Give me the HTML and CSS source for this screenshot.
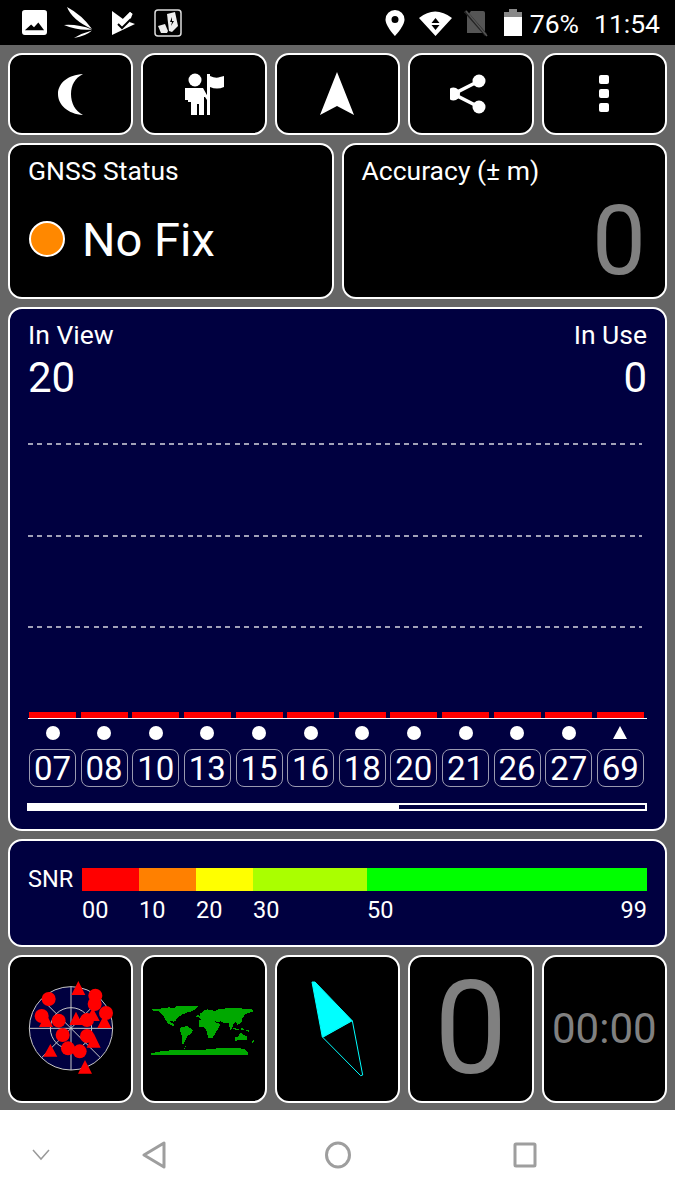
FILE: index.html
```html
<!DOCTYPE html>
<html lang="en">
<head>
<meta charset="utf-8">
<title>GNSS Status</title>
<link rel="stylesheet" href="styles.css">
</head>
<body>
<div class="status-bar">
  <div class="status-left">
    <svg class="si" width="25" height="25" viewBox="0 0 26 26"><path fill="#fff" fill-rule="evenodd" d="M3 0h20a3 3 0 0 1 3 3v20a3 3 0 0 1-3 3H3a3 3 0 0 1-3-3V3a3 3 0 0 1 3-3zM3 21h20l-6-8-4.500 5-3-3z"/></svg>
    <svg class="si bird" width="30" height="34" viewBox="0 0 30 34"><path fill="#fff" d="M4 1Q9 14 29 23Q19 9 4 1zM1 19Q15 25 29 23.500Q15 18 1 19zM11 32Q23 30 29 24.500Q19 27 11 32z"/></svg>
    <svg class="si check" width="23" height="25" viewBox="0 0 23 25"><path fill="#fff" d="M0 0l11 8 7-7 2.500 2-3 8 5.500 2L0 24z"/><path fill="none" stroke="#000" stroke-width="2" d="M6 13l4 4 9-9"/><path fill="#fff" d="M10 9l8-8 2.500 2-9 10z"/></svg>
    <svg class="si" width="28" height="28" viewBox="0 0 28 28"><rect x="1" y="1" width="26" height="26" rx="3" fill="none" stroke="#ddd" stroke-width="1.500"/><path fill="#eee" d="M13 5l8-2 3 14-6 6-3-1z"/><path fill="#eee" d="M4 17l7-2 3 7-1 2H7z"/><path fill="#000" d="M18 8l-2 5 2 0-1 4 3-5-2 0z"/></svg>
  </div>
  <div class="status-right">
    <svg class="si" width="20" height="26" viewBox="0 0 20 26"><path fill="#fff" fill-rule="evenodd" d="M10 0a9.500 9.500 0 0 1 9.500 9.500C19.500 16 10 26 10 26S.5 16 .5 9.500A9.500 9.500 0 0 1 10 0zm0 6a3.500 3.500 0 1 0 0 7 3.500 3.500 0 0 0 0-7z"/></svg>
    <svg class="si wifi" width="33" height="26" viewBox="0 0 33 26"><path fill="#fff" fill-rule="evenodd" d="M0 8Q16-5 33 8L16.500 26zM16.500 8l-4 5h8zM12.500 15l4 5 4-5z"/></svg>
    <svg class="si sim" width="24" height="28" viewBox="0 0 24 28"><path fill="#555" d="M7 2h12a2 2 0 0 1 2 2v20H3V7z"/><path stroke="#222" stroke-width="3" d="M1 2l21 24"/><path stroke="#555" stroke-width="1.500" d="M2 2l21 25"/></svg>
    <svg class="si batt" width="18" height="28" viewBox="0 0 18 28"><path fill="#888" d="M5 0h8v3h5v7H0V3h5z"/><path fill="#fff" d="M0 8h18v19H0z"/></svg>
    <span class="pct">76%</span>
    <span class="clock">11:54</span>
  </div>
</div>

<main class="panel">
  <section class="row-actions">
    <div class="card center">
      <svg width="40" height="44" viewBox="0 0 40 44"><path fill="#fff" d="M32 2C17 3 7 11 7 22s10 20 25 21c-8-4-12-12-12-21S24 6 32 2z"/></svg>
    </div>
    <div class="card center">
      <svg width="44" height="44" viewBox="0 0 44 44"><circle cx="13" cy="8" r="6.500" fill="#fff"/><path fill="#fff" d="M3 16h18l5 9 2-1v3l-3 1-2-3-1 0v18h-5V32h-2v11H9V30H6v-2H3z"/><path fill="#fff" d="M25 2h3v41h-3z"/><path fill="#fff" d="M28 4q6 3 10 1l4-1v11q-7 3-14 0z"/></svg>
    </div>
    <div class="card center">
      <svg width="36" height="44" viewBox="0 0 36 44"><path fill="#fff" d="M18 0l17 43-17-9-17 9z"/></svg>
    </div>
    <div class="card center">
      <svg width="42" height="44" viewBox="4 0 42 44"><circle cx="33" cy="9" r="6.500" fill="#fff"/><circle cx="7.500" cy="22" r="6.500" fill="#fff"/><circle cx="33" cy="35" r="6.500" fill="#fff"/><path stroke="#fff" stroke-width="3.500" d="M33 9L7.500 22 33 35" fill="none"/></svg>
    </div>
    <div class="card center">
      <svg width="12" height="38" viewBox="0 0 12 38"><rect x="1" y="0" width="10" height="9" rx="2" fill="#fff"/><rect x="1" y="14" width="10" height="9" rx="2" fill="#fff"/><rect x="1" y="28" width="10" height="9" rx="2" fill="#fff"/></svg>
    </div>
  </section>

  <section class="row-status">
    <div class="card status-card">
      <div class="label">GNSS Status</div>
      <div class="fix"><span class="fix-dot"></span><span class="fix-text">No Fix</span></div>
    </div>
    <div class="card status-card">
      <div class="label">Accuracy (± m)</div>
      <div class="accuracy">0</div>
    </div>
  </section>

  <section class="card navy chart">
    <div class="chart-head">
      <div><div class="label">In View</div><div class="count">20</div></div>
      <div class="right"><div class="label">In Use</div><div class="count">0</div></div>
    </div>
    <div class="plot">
      <div class="gridline"></div>
      <div class="gridline"></div>
      <div class="gridline"></div>
    </div>
    <div class="bars">
      <div class="bar"></div><div class="bar"></div><div class="bar"></div><div class="bar"></div>
      <div class="bar"></div><div class="bar"></div><div class="bar"></div><div class="bar"></div>
      <div class="bar"></div><div class="bar"></div><div class="bar"></div><div class="bar"></div>
    </div>
    <div class="sats">
      <div class="sat"><span class="dot"></span><span class="prn">07</span></div>
      <div class="sat"><span class="dot"></span><span class="prn">08</span></div>
      <div class="sat"><span class="dot"></span><span class="prn">10</span></div>
      <div class="sat"><span class="dot"></span><span class="prn">13</span></div>
      <div class="sat"><span class="dot"></span><span class="prn">15</span></div>
      <div class="sat"><span class="dot"></span><span class="prn">16</span></div>
      <div class="sat"><span class="dot"></span><span class="prn">18</span></div>
      <div class="sat"><span class="dot"></span><span class="prn">20</span></div>
      <div class="sat"><span class="dot"></span><span class="prn">21</span></div>
      <div class="sat"><span class="dot"></span><span class="prn">26</span></div>
      <div class="sat"><span class="dot"></span><span class="prn">27</span></div>
      <div class="sat"><span class="tri"></span><span class="prn">69</span></div>
    </div>
    <div class="progress"><div class="progress-fill"></div></div>
  </section>

  <section class="card navy snr">
    <div class="snr-name">SNR</div>
    <div class="snr-scale">
      <div class="snr-bar">
        <div class="seg s1"></div><div class="seg s2"></div><div class="seg s3"></div><div class="seg s4"></div><div class="seg s5"></div>
      </div>
      <div class="snr-ticks">
        <span class="s1w">00</span><span class="s2w">10</span><span class="s3w">20</span><span class="s4w">30</span><span class="s5w">50</span><span class="last">99</span>
      </div>
    </div>
  </section>

  <section class="row-tools">
    <div class="card center">
      <svg class="lift" width="100" height="105" viewBox="0 0 300 315">
        <circle cx="150" cy="160" r="125" fill="#000040" stroke="#c8c8c8" stroke-width="3"/>
        <circle cx="150" cy="160" r="62" fill="none" stroke="#c8c8c8" stroke-width="3"/>
        <path stroke="#c8c8c8" stroke-width="3" d="M25 160H275M150 35V285M62 72L238 248M62 248L238 72"/>
        <g fill="#f00">
          <circle cx="83" cy="72" r="21"/><circle cx="223" cy="62" r="21"/><circle cx="221" cy="87" r="21"/><circle cx="255" cy="114" r="21"/><circle cx="62" cy="123" r="21"/><circle cx="113" cy="137" r="21"/><circle cx="198" cy="135" r="21"/><circle cx="125" cy="180" r="21"/><circle cx="198" cy="183" r="21"/><circle cx="141" cy="220" r="21"/><circle cx="176" cy="229" r="21"/>
          <path d="M172 18l21 42h-42zM165 110l20 40h-40zM215 98l21 40h-42zM250 118l21 41h-42zM75 115l21 41h-42zM218 175l21 43h-42zM88 207l21 38h-42zM192 255l21 41h-42z"/>
        </g>
      </svg>
    </div>
    <div class="card center">
      <svg class="lift" width="120" height="65" viewBox="435 135 360 195" shape-rendering="crispEdges">
        <g fill="#00a800">
          <path d="M458 178l12 0 40-6 15 2 10-7h65l-8 8-8 6-8 4-12 1-3 4-9 2-8 5-10 8-5 8-5 3-3-4-9 2 12 9 3 3-6 1-14-7-9-13-8-14-12-9-20-3z"/>
          <path d="M545 232l20-4 17 12-4 10-13 8-10 22-7 3 0-28-5-15z"/>
          <path d="M600 212l15-7 25 1 10 12 15 4-13 23-12 20h-12l-6-25-7-8-15-2z"/>
          <path d="M600 203l3-12 8-6 4-5 12-2 8 3 15 1 8-5 25-2 20-2 30 3 32 3-3 5-17 6-8 3-3 8-6 4 2 9-8 8-8 2-3-8-8 6-3 12-6 6-6-22-14 2-8-6-12 4-5-4-12 1-12 0-9-1z"/>
          <path d="M708 262l10-3 7-11 8 6 12 6 0 9-14 2-10-1-12 3z"/>
          <path d="M698 232l14 4 8 2 0 3-14-3zM722 232l10 3 6 5-10 0zM740 240l12 2-2 3-10-2zM760 273l5-4 0 5-5 4zM592 197l7-2 0 5-7 1z"/>
          <path d="M457 315v-5l32-7 30-2 30-1 5 1h12l30-1 10 0 20-2 30-3 20-2 30 0 30 4 12 12v6z"/>
          <path d="M553 298l5-6 0 6zM558 290l4-2-2 5z"/>
        </g>
      </svg>
    </div>
    <div class="card compass">
      <svg width="121" height="144" viewBox="0 0 121 144">
        <path fill="#0ff" stroke="#0ff" d="M35 25h3l37 38.500-29.700 16.500z"/>
        <path fill="none" stroke="#0ff" stroke-width="1" d="M75.300 63.700l10.400 54.300-2 .7L45.700 80.300z"/>
      </svg>
    </div>
    <div class="card center big-zero">0</div>
    <div class="card center timer">00:00</div>
  </section>
</main>

<nav class="nav-bar">
  <svg class="nav-chev" width="20" height="14" viewBox="0 0 20 14"><path fill="none" stroke="#9a9a9a" stroke-width="1.500" d="M2 2l8 9 8-9"/></svg>
  <svg class="nav-back" width="24" height="28" viewBox="0 0 24 28"><path fill="none" stroke="#9e9e9e" stroke-width="3" stroke-linejoin="round" d="M22 2v24L2 14z"/></svg>
  <svg class="nav-home" width="26" height="28" viewBox="0 0 26 28"><ellipse cx="13" cy="14" rx="11.500" ry="12" fill="none" stroke="#9e9e9e" stroke-width="3"/></svg>
  <svg class="nav-recent" width="24" height="26" viewBox="0 0 24 26"><rect x="2" y="2" width="20" height="22" rx="1" fill="none" stroke="#9e9e9e" stroke-width="3"/></svg>
</nav>
</body>
</html>
```

FILE: styles.css
```css
* { box-sizing: border-box; }

html, body {
  margin: 0;
  padding: 0;
}

body {
  width: 675px;
  height: 1200px;
  background: #666;
  color: #fff;
  font-family: Roboto, "Liberation Sans", sans-serif;
  display: flex;
  flex-direction: column;
  overflow: hidden;
}

svg { display: block; flex: none; }

.status-bar {
  height: 45px;
  background: #000;
  display: flex;
  justify-content: space-between;
  align-items: center;
  padding: 0 15px 0 22px;
  flex: none;
}

.status-left, .status-right {
  display: flex;
  align-items: center;
}

.status-left { gap: 19px; }
.bird { margin-left: -3px; }
.check { margin-top: 2px; }

.status-right { padding-top: 1px; }
.wifi { margin-left: 14px; }
.sim { margin-left: 12px; }
.batt { margin-left: 16px; }

.pct {
  font-size: 26.500px;
  margin-left: 8px;
}

.clock {
  font-size: 26.500px;
  margin-left: 15px;
}

.panel {
  flex: 1;
  padding: 8px 8px 7px;
  display: flex;
  flex-direction: column;
  gap: 8px;
}

.card {
  background: #000;
  border: 2px solid #fff;
  border-radius: 14px;
  min-width: 0;
}

.center {
  display: flex;
  align-items: center;
  justify-content: center;
}

.navy { background: #000040; }

.lift { margin-bottom: 3px; }

.row-actions {
  height: 82px;
  display: grid;
  grid-template-columns: repeat(5, 1fr);
  gap: 8px;
}

.row-status {
  height: 156px;
  display: grid;
  grid-template-columns: 1fr 1fr;
  gap: 8px;
}

.status-card {
  padding: 10px 18px 0;
}

.label {
  font-size: 26.500px;
  line-height: 32px;
}

.fix {
  display: flex;
  align-items: center;
  margin-top: 24px;
  padding-left: 1px;
}

.fix-dot {
  width: 36px;
  height: 36px;
  border-radius: 50%;
  background: #ff8800;
  border: 2px solid #fff;
  flex: none;
}

.fix-text {
  font-size: 47px;
  line-height: 54px;
  margin-left: 17px;
  padding-top: 2px;
}

.accuracy {
  font-size: 96px;
  line-height: 100px;
  color: #808080;
  text-align: right;
  margin-top: 4px;
  margin-right: 1px;
}

.chart {
  height: 524px;
  padding: 10px 18px 18px 18px;
  display: flex;
  flex-direction: column;
}

.chart-head {
  display: flex;
  justify-content: space-between;
  height: 70px;
}

.right { text-align: right; }

.count {
  font-size: 42px;
  line-height: 50px;
  margin-top: 2px;
}

.plot {
  height: 314px;
  display: flex;
  flex-direction: column;
  padding-top: 54px;
  gap: 89.500px;
  margin-right: 5px;
}

.gridline {
  height: 2px;
  flex: none;
  background: repeating-linear-gradient(90deg, #a0a0b8 0 5px, transparent 5px 9.400px);
}

.bars {
  margin-top: 9px;
  height: 7px;
  display: grid;
  grid-template-columns: repeat(12, 47px);
  column-gap: 4.630px;
  padding-left: 1px;
  border-bottom: 1px solid #fff;
}

.bar {
  background: #f00;
  height: 6px;
}

.sats {
  display: grid;
  grid-template-columns: repeat(12, 47px);
  column-gap: 4.630px;
  padding-left: 1px;
  margin-top: 7px;
}

.sat {
  display: flex;
  flex-direction: column;
  align-items: center;
}

.dot {
  width: 14px;
  height: 14px;
  border-radius: 50%;
  background: #fff;
  margin-bottom: 9px;
  flex: none;
}

.tri {
  width: 0;
  height: 0;
  border-left: 7px solid transparent;
  border-right: 7px solid transparent;
  border-bottom: 13px solid #fff;
  margin-bottom: 10px;
  flex: none;
}

.prn {
  width: 47px;
  height: 38px;
  border: 1px solid #9a9ab0;
  border-radius: 8px;
  font-size: 33px;
  line-height: 37px;
  text-align: center;
}

.progress {
  height: 8px;
  border: 2px solid #fff;
  margin-top: 16px;
  margin-left: -1px;
}

.progress-fill {
  width: 60%;
  height: 100%;
  background: #fff;
}

.snr {
  height: 108px;
  padding: 27px 18px 0;
  display: flex;
}

.snr-name {
  font-size: 23.500px;
  line-height: 26px;
  width: 54px;
  flex: none;
  margin-top: -2px;
}

.snr-scale {
  flex: 1;
}

.snr-bar {
  height: 23px;
  display: flex;
}

.seg { height: 100%; }
.s1 { width: 57px; background: #f00; }
.s2 { width: 57px; background: #ff8000; }
.s3 { width: 57px; background: #ff0; }
.s4 { width: 114px; background: #aaff00; }
.s5 { flex: 1; background: #0f0; }

.snr-ticks {
  display: flex;
  font-size: 23.500px;
  line-height: 28px;
  margin-top: 5px;
}

.s1w, .s2w, .s3w { width: 57px; flex: none; }
.s4w { width: 114px; flex: none; }
.s5w { flex: 1; }
.last { flex: none; }

.row-tools {
  height: 148px;
  display: grid;
  grid-template-columns: repeat(5, 1fr);
  gap: 8px;
}

.big-zero {
  font-size: 130px;
  line-height: 132px;
  color: #808080;
}

.timer {
  font-size: 42px;
  line-height: 50px;
  color: #808080;
}

.nav-bar {
  height: 90px;
  background: #fff;
  flex: none;
  display: flex;
  align-items: center;
  padding-left: 31px;
}

.nav-back { margin-left: 91px; }
.nav-home { margin-left: 159px; }
.nav-recent { margin-left: 162px; }
```
